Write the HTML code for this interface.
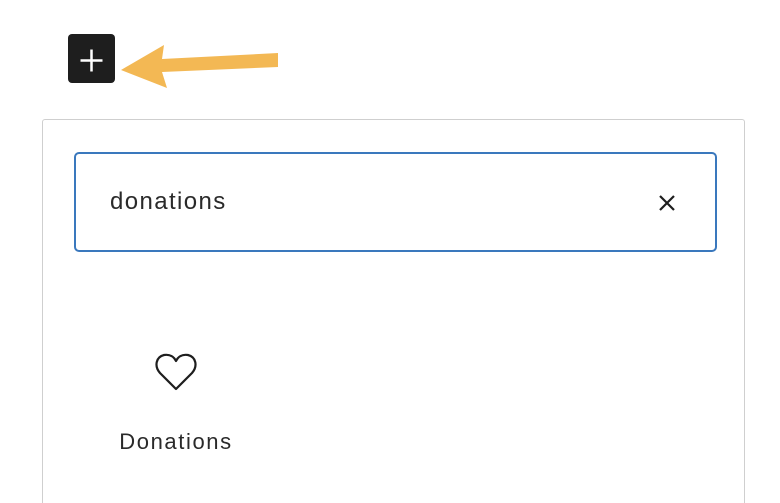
<!DOCTYPE html>
<html><head><meta charset="utf-8"><style>
html,body{margin:0;padding:0;width:780px;height:502px;overflow:hidden;background:#fff;font-family:"Liberation Sans",sans-serif;}
.plus{position:absolute;left:68px;top:34px;width:47px;height:49px;background:#1e1e1e;border-radius:4px;}
.panel{position:absolute;left:42px;top:119px;width:701px;height:383px;border:1px solid #cfcfcf;border-bottom:none;border-radius:3px 3px 0 0;box-sizing:content-box;}
.input{position:absolute;left:74px;top:152px;width:639px;height:96px;border:2px solid #3a78bd;border-radius:5px;}
.txt{position:absolute;left:110px;top:188px;font-size:24px;letter-spacing:1.4px;color:#2a2a2a;}
.lbl{position:absolute;left:96px;width:160px;text-align:center;top:429px;font-size:22px;letter-spacing:1.6px;color:#2a2a2a;}
svg{position:absolute;}
</style></head><body>
<div class="plus"></div>
<svg width="780" height="502" style="left:0;top:0">
<path d="M80.5 60.5H102.5M91.5 49.5V71.5" stroke="#fff" stroke-width="2.5" fill="none"/>
<path d="M121 70 L164 45 L162 59 L278 53 L278 67 L162 72 L167 88 Z" fill="#f3b854"/>
</svg>
<div class="panel"></div>
<div class="input"></div>
<div class="txt">donations</div>
<svg width="780" height="502" style="left:0;top:0">
<path d="M660 196L674 210M674 196L660 210" stroke="#1e1e1e" stroke-width="2.2" fill="none"/>
<path d="M176 389 L160 373 C154 366 156 357 164 355 C170 354 174 357 176 361 C178 357 182 354 188 355 C196 357 198 366 192 373 Z" stroke="#1e1e1e" stroke-width="2.2" fill="none" stroke-linejoin="round"/>
</svg>
<div class="lbl">Donations</div>
</body></html>
